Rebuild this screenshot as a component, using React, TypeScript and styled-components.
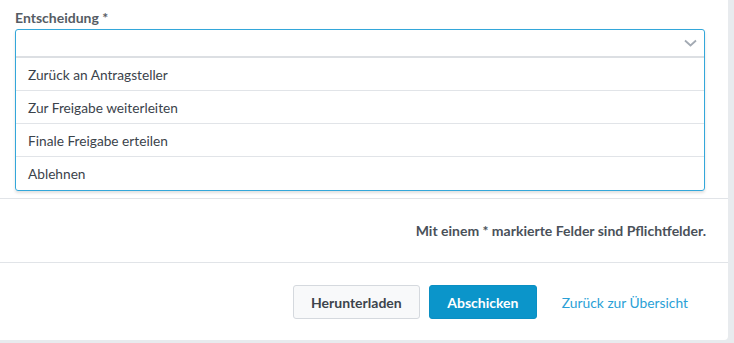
import React from 'react';
import styled, { createGlobalStyle } from 'styled-components';

const GlobalStyle = createGlobalStyle`
  html, body {
    margin: 0;
    padding: 0;
    background: #e8ebee;
  }
  * {
    box-sizing: border-box;
  }
`;

const Page = styled.div`
  width: 734px;
  height: 343px;
  background: #e8ebee;
  font-family: Lato, 'Open Sans', sans-serif;
  font-size: 14px;
  color: #3b434b;
  overflow: hidden;
`;

const Card = styled.div`
  width: 728px;
  height: 340px;
  background: #ffffff;
  border-bottom-right-radius: 4px;
  display: flex;
  flex-direction: column;
`;

const FieldSection = styled.div`
  height: 199px;
  padding: 9px 23px 0 15px;
  border-bottom: 1px solid #e1e4e8;
`;

const Label = styled.div`
  font-weight: 700;
  color: #555c64;
  line-height: 18px;
  margin-bottom: 2px;
`;

const Dropdown = styled.div`
  border: 1px solid #33a7da;
  border-radius: 3px;
  box-shadow: 0 2px 3px rgba(0, 0, 0, 0.12);
`;

const Control = styled.div`
  height: 28px;
  display: flex;
  align-items: center;
  justify-content: flex-end;
  padding-right: 7px;
  border-bottom: 2px solid #dcdfe3;
`;

const Option = styled.div<{ $last?: boolean }>`
  height: 33px;
  display: flex;
  align-items: center;
  padding-left: 12px;
  border-bottom: ${(p) => (p.$last ? 'none' : '1px solid #e1e4e8')};
  color: #3b434b;
  font-size: 13.7px;
`;

const HintRow = styled.div`
  height: 64px;
  display: flex;
  align-items: center;
  justify-content: flex-end;
  padding-right: 22px;
  border-bottom: 1px solid #e1e4e8;
  font-weight: 700;
  color: #4a5159;
`;

const Footer = styled.div`
  flex: 1;
  display: flex;
  align-items: center;
  justify-content: flex-end;
  gap: 9px;
  padding-right: 40px;
  padding-top: 1px;
`;

const Button = styled.button<{ $primary?: boolean }>`
  height: 34px;
  width: ${(p) => (p.$primary ? '108px' : '127px')};
  padding: 0;
  border-radius: 3px;
  font-family: inherit;
  font-size: 14px;
  font-weight: 700;
  cursor: pointer;
  border: 1px solid ${(p) => (p.$primary ? '#0a8fc3' : '#d5d9de')};
  background: ${(p) => (p.$primary ? '#0b95ca' : '#f8f9fa')};
  color: ${(p) => (p.$primary ? '#ffffff' : '#3d444c')};
`;

const Link = styled.a`
  margin-left: 16px;
  color: #2a9fd6;
  font-size: 13.8px;
  text-decoration: none;
  cursor: pointer;
`;

const Chevron = () => (
  <svg width="13" height="8" viewBox="0 0 13 8" fill="none">
    <path d="M1 1.5 L6.5 6.5 L12 1.5" stroke="#a3aab3" strokeWidth="1.8" />
  </svg>
);

const options = [
  'Zurück an Antragsteller',
  'Zur Freigabe weiterleiten',
  'Finale Freigabe erteilen',
  'Ablehnen',
];

export default function App() {
  return (
    <Page>
      <GlobalStyle />
      <Card>
        <FieldSection>
          <Label>Entscheidung *</Label>
          <Dropdown>
            <Control>
              <Chevron />
            </Control>
            {options.map((o, i) => (
              <Option key={o} $last={i === options.length - 1}>
                {o}
              </Option>
            ))}
          </Dropdown>
        </FieldSection>
        <HintRow>Mit einem * markierte Felder sind Pflichtfelder.</HintRow>
        <Footer>
          <Button>Herunterladen</Button>
          <Button $primary>Abschicken</Button>
          <Link>Zurück zur Übersicht</Link>
        </Footer>
      </Card>
    </Page>
  );
}
